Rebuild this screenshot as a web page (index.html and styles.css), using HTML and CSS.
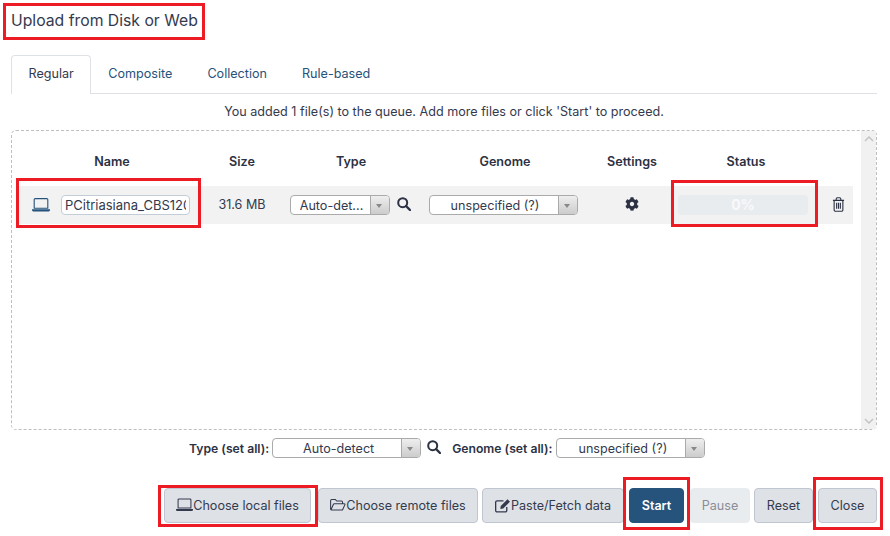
FILE: index.html
```html
<!DOCTYPE html>
<html>
	<head>
		<title>Upload from Disk or Web</title>
		<link rel="stylesheet" href="styles.css">
	</head>
	<body>
		<svg class="defs" width="0" height="0">
			<symbol id="i-laptop" viewBox="0 0 18 14">
				<path d="M3.200 .6h11.600a1 1 0 0 1 1 1v8.600H2.200V1.600a1 1 0 0 1 1-1z" fill="none" stroke="currentColor" stroke-width="1.100"/>
				<path d="M0 11.200h18v.9a1.300 1.300 0 0 1-1.300 1.300H1.300A1.300 1.300 0 0 1 0 12.100z" fill="currentColor"/>
			</symbol>
			<symbol id="i-search" viewBox="0 0 14 14">
				<circle cx="5.700" cy="5.700" r="4.500" fill="none" stroke="currentColor" stroke-width="2"/>
				<path d="M9 9l4 4" fill="none" stroke="currentColor" stroke-width="2.400" stroke-linecap="round"/>
			</symbol>
			<symbol id="i-cog" viewBox="0 0 512 512">
				<path fill="currentColor" d="M487.4 315.7l-42.6-24.6c4.300-23.200 4.300-47 0-70.200l42.600-24.600c4.900-2.800 7.100-8.600 5.500-14-11.100-35.600-30-67.800-54.700-94.600-3.800-4.100-10-5.100-14.800-2.300L380.800 110c-17.900-15.400-38.500-27.300-60.800-35.100V25.800c0-5.600-3.900-10.500-9.400-11.700-36.700-8.200-74.300-7.800-109.200 0-5.500 1.200-9.400 6.100-9.400 11.700V75c-22.200 7.900-42.800 19.800-60.800 35.100L88.700 85.500c-4.900-2.800-11-1.900-14.800 2.300-24.700 26.700-43.600 58.900-54.700 94.600-1.700 5.400.6 11.200 5.500 14L67.300 221c-4.300 23.200-4.300 47 0 70.200l-42.600 24.600c-4.900 2.800-7.100 8.600-5.500 14 11.100 35.600 30 67.800 54.700 94.600 3.800 4.100 10 5.100 14.800 2.300l42.600-24.600c17.900 15.400 38.500 27.300 60.800 35.100v49.200c0 5.600 3.900 10.500 9.400 11.700 36.700 8.200 74.300 7.800 109.200 0 5.500-1.200 9.400-6.100 9.400-11.700v-49.200c22.200-7.900 42.800-19.800 60.800-35.100l42.600 24.600c4.900 2.800 11 1.900 14.800-2.300 24.700-26.700 43.600-58.900 54.700-94.600 1.500-5.500-.7-11.300-5.600-14.100zM256 336c-44.100 0-80-35.900-80-80s35.900-80 80-80 80 35.900 80 80-35.900 80-80 80z"/>
			</symbol>
			<symbol id="i-trash" viewBox="0 0 14 16">
				<path d="M1 3.500h12M2.300 3.500v10.300a1.500 1.500 0 0 0 1.500 1.500h6.400a1.500 1.500 0 0 0 1.500-1.500V3.500M4.500 3.500V2a1.300 1.300 0 0 1 1.300-1.300h2.400A1.300 1.300 0 0 1 9.500 2v1.500M5 6v6.500M7 6v6.500M9 6v6.500" fill="none" stroke="currentColor" stroke-width="1.200"/>
			</symbol>
			<symbol id="i-folder" viewBox="0 0 18 14">
				<path d="M.7 12V2a1.200 1.200 0 0 1 1.200-1.200h4l1.600 1.700h5.400a1.200 1.200 0 0 1 1.200 1.200v1.800M.9 12.800l3-6.600a1 1 0 0 1 .9-.6h11.400a.7.7 0 0 1 .6 1l-2.500 5.500a1 1 0 0 1-.9.6H1.300" fill="none" stroke="currentColor" stroke-width="1.200" stroke-linejoin="round"/>
			</symbol>
			<symbol id="i-edit" viewBox="0 0 17 15">
				<path d="M12.500 9v3.800a1.500 1.500 0 0 1-1.500 1.500H2.200a1.500 1.500 0 0 1-1.500-1.500V4a1.500 1.500 0 0 1 1.500-1.500H9" fill="none" stroke="currentColor" stroke-width="1.400"/>
				<path d="M13.300 .8l2.600 2.600-7.200 7.200-3.100.5.500-3.100z" fill="currentColor"/>
			</symbol>
		</svg>

		<div class="page">
			<h1>Upload from Disk or Web</h1>

			<ul class="tabs">
				<li class="tab active">Regular</li>
				<li class="tab">Composite</li>
				<li class="tab">Collection</li>
				<li class="tab">Rule-based</li>
			</ul>

			<p class="message">You added 1 file(s) to the queue. Add more files or click 'Start' to proceed.</p>

			<div class="dropbox">
				<div class="list">
					<div class="columns heading">
						<div>Name</div>
						<div>Size</div>
						<div>Type</div>
						<div>Genome</div>
						<div>Settings</div>
						<div>Status</div>
						<div></div>
					</div>
					<div class="columns row">
						<div class="cell name-cell">
							<svg class="laptop"><use href="#i-laptop"/></svg>
							<input class="name" value="PCitriasiana_CBS120" readonly>
						</div>
						<div class="cell">31.6 MB</div>
						<div class="cell type-cell">
							<div class="select type-select">
								<span class="select-text">Auto-det...</span>
								<span class="select-arrow"></span>
							</div>
							<svg class="search"><use href="#i-search"/></svg>
						</div>
						<div class="cell genome-cell">
							<div class="select genome-select">
								<span class="select-text">unspecified (?)</span>
								<span class="select-arrow"></span>
							</div>
						</div>
						<div class="cell">
							<svg class="cog"><use href="#i-cog"/></svg>
						</div>
						<div class="cell status-cell">
							<div class="progress">0%</div>
						</div>
						<div class="cell trash-cell">
							<svg class="trash"><use href="#i-trash"/></svg>
						</div>
					</div>
				</div>
				<div class="scrollbar">
					<svg class="scroll-arrow" viewBox="0 0 10 6"><path d="M1 5l4-4 4 4" fill="none" stroke="currentColor" stroke-width="1.500"/></svg>
					<svg class="scroll-arrow" viewBox="0 0 10 6"><path d="M1 1l4 4 4-4" fill="none" stroke="currentColor" stroke-width="1.500"/></svg>
				</div>
			</div>

			<div class="set-all">
				<b>Type (set all):</b>
				<div class="select wide-select">
					<span class="select-text">Auto-detect</span>
					<span class="select-arrow"></span>
				</div>
				<svg class="search"><use href="#i-search"/></svg>
				<b class="genome-label">Genome (set all):</b>
				<div class="select wide-select">
					<span class="select-text">unspecified (?)</span>
					<span class="select-arrow"></span>
				</div>
			</div>

			<div class="buttons">
				<button class="btn local"><svg class="btn-icon"><use href="#i-laptop"/></svg>Choose local files</button>
				<button class="btn remote"><svg class="btn-icon"><use href="#i-folder"/></svg>Choose remote files</button>
				<button class="btn paste"><svg class="btn-icon"><use href="#i-edit"/></svg>Paste/Fetch data</button>
				<button class="btn start">Start</button>
				<button class="btn pause">Pause</button>
				<button class="btn reset">Reset</button>
				<button class="btn close">Close</button>
			</div>
		</div>

		<!-- red annotation boxes drawn over the screenshot -->
		<div class="mark mark-title"></div>
		<div class="mark mark-name"></div>
		<div class="mark mark-status"></div>
		<div class="mark mark-local"></div>
		<div class="mark mark-start"></div>
		<div class="mark mark-close"></div>
	</body>
</html>
```

FILE: styles.css
```css
html, body {
	margin: 0;
	height: 100%;
	overflow: hidden;
}

body {
	font-family: Inter, "Noto Sans", sans-serif;
	font-size: 12.600px;
	color: #343a4e;
	background-color: #fff;
}

.defs {
	display: block;
	height: 0;
}

.page {
	padding: 0 13px 0 11px;
}

h1 {
	font-size: 15.750px;
	font-weight: 400;
	line-height: 20px;
	margin: 0;
	padding: 11px 0 24px 0;
}

.tabs {
	display: flex;
	list-style: none;
	margin: 0;
	padding: 0;
	height: 39px;
	border-bottom: 1px solid #dee2e6;
	box-sizing: border-box;
}

.tab {
	padding: 9px 16.500px 0 16.500px;
	line-height: 18px;
	color: #25537b;
	border: 1px solid transparent;
	border-bottom: 0;
}

.tab.active {
	padding-right: 16px;
	color: #343a4e;
	background-color: #fff;
	border-color: #dee2e6;
	border-radius: 4px 4px 0 0;
	height: 39px;
	box-sizing: border-box;
}

.message {
	margin: 0;
	padding-top: 9px;
	height: 27px;
	line-height: 18px;
	text-align: center;
}

.dropbox {
	display: flex;
	justify-content: space-between;
	height: 300px;
	box-sizing: border-box;
	border: 1px dashed #bfbfbf;
	border-radius: 5px;
}

.list {
	padding: 0 0 0 6px;
	width: 835px;
}

.columns {
	display: grid;
	grid-template-columns: 188px 72px 146px 162px 92px 136px 39px;
}

.heading {
	height: 55px;
	padding-top: 22px;
	box-sizing: border-box;
	line-height: 18px;
	font-weight: 600;
	color: #2c3143;
	text-align: center;
}

.row {
	height: 38px;
	background-color: #f2f2f2;
}

.cell {
	display: flex;
	align-items: center;
	justify-content: center;
	padding-bottom: 1px;
	box-sizing: border-box;
}

.name-cell {
	justify-content: flex-start;
	padding-left: 14px;
}

.laptop {
	width: 18px;
	height: 14px;
	color: #25537b;
	margin-right: 11px;
}

.name {
	width: 129px;
	height: 20px;
	box-sizing: border-box;
	padding: 0 3px;
	font-family: inherit;
	font-size: 13px;
	color: #343a4e;
	background-color: #fff;
	border: 1px solid #c3cdd8;
	border-radius: 4px;
	outline: none;
}

.select {
	display: flex;
	height: 20px;
	box-sizing: border-box;
	background-color: #fff;
	border: 1px solid #aaa;
	border-radius: 4px;
	line-height: 19px;
	overflow: hidden;
}

.select-text {
	flex: 1;
	padding-left: 3px;
	text-align: center;
	white-space: nowrap;
}

.select-arrow {
	position: relative;
	width: 18px;
	border-left: 1px solid #aaa;
	background: linear-gradient(#eee, #ccc);
}

.select-arrow::after {
	content: "";
	position: absolute;
	left: 5px;
	top: 8px;
	border: 3px solid transparent;
	border-top: 4px solid #888;
	border-bottom: 0;
}

.type-cell {
	padding-right: 2px;
}

.genome-cell {
	padding-right: 4px;
}

.type-select {
	width: 100px;
}

.genome-select {
	width: 149px;
}

.wide-select {
	width: 149px;
}

.search {
	width: 14px;
	height: 14px;
	color: #2c3143;
	margin: -2px 0 0 7px;
	flex: none;
}

.cog {
	width: 14px;
	height: 14px;
	color: #2c3143;
	margin-bottom: 1px;
}

.status-cell {
	justify-content: flex-start;
}

.progress {
	width: 130px;
	height: 20px;
	line-height: 20px;
	text-align: center;
	font-size: 14px;
	background-color: #e9ecef;
	color: #f8f9fa;
	font-weight: 700;
	border-radius: 4px;
}

.trash-cell {
	padding-left: 10px;
}

.trash {
	width: 13px;
	height: 15px;
	color: #2c3143;
	margin-bottom: 1px;
}

.scrollbar {
	display: flex;
	flex-direction: column;
	justify-content: space-between;
	align-items: center;
	width: 15px;
	padding: 5px 0;
	box-sizing: border-box;
	background-color: #f1f1f1;
}

.scroll-arrow {
	width: 10px;
	height: 6px;
	color: #c4c4c4;
}

.set-all {
	display: flex;
	align-items: center;
	height: 20px;
	margin-top: 8px;
	padding-left: 178px;
}

.set-all b {
	font-weight: 600;
	font-size: 12.200px;
	margin-right: 3px;
	color: #2c3143;
}

.set-all .search {
	margin-left: 6px;
}

.set-all .genome-label {
	margin-left: 11px;
	margin-right: 4px;
}

.buttons {
	display: flex;
	justify-content: flex-end;
	gap: 4px;
	margin-top: 30px;
}

.btn {
	display: flex;
	align-items: center;
	justify-content: center;
	height: 35px;
	padding: 0 0 1px 0;
	font-family: inherit;
	font-size: 12.600px;
	white-space: nowrap;
	color: #343a4e;
	background-color: #dee2e6;
	border: 1px solid #bfc6d1;
	border-radius: 4px;
}

.btn-icon {
	width: 17px;
	height: 14px;
	flex: none;
}

.local {
	width: 147px;
	margin-right: 3px;
}

.remote {
	width: 160px;
}

.remote .btn-icon {
	width: 16px;
}

.paste {
	width: 142px;
	margin-right: 1px;
}

.paste .btn-icon {
	width: 16px;
	height: 15px;
}

.start {
	width: 55px;
	color: #fff;
	font-weight: 600;
	background-color: #25537b;
	border-color: #25537b;
	margin-right: 2px;
}

.pause {
	width: 60px;
	color: #8a8d97;
	background-color: #e9ecef;
	border-color: #e9ecef;
}

.reset {
	width: 59px;
	margin-right: 1px;
}

.close {
	width: 59px;
}

.mark {
	position: absolute;
	box-sizing: border-box;
	border: 3px solid #ed1c24;
}

.mark-title {
	left: 3px;
	top: 3px;
	width: 202px;
	height: 37px;
}

.mark-name {
	left: 16px;
	top: 178px;
	width: 185px;
	height: 50px;
}

.mark-status {
	left: 671px;
	top: 180px;
	width: 147px;
	height: 47px;
}

.mark-local {
	left: 158px;
	top: 485px;
	width: 160px;
	height: 42px;
}

.mark-start {
	left: 623px;
	top: 477px;
	width: 67px;
	height: 53px;
}

.mark-close {
	left: 813px;
	top: 477px;
	width: 70px;
	height: 53px;
}
```
